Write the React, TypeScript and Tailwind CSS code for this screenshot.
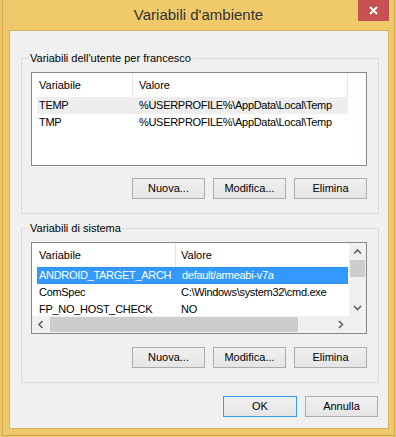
import React from 'react';

const font = { fontFamily: '"Liberation Sans", Arial, sans-serif' };

const Chevron = ({ dir }: { dir: 'up' | 'down' | 'left' | 'right' }) => {
  const pts = {
    up: '1,5.5 4.5,2 8,5.5',
    down: '1,2 4.5,5.5 8,2',
    left: '5.5,1 2,4.5 5.5,8',
    right: '2,1 5.5,4.5 2,8',
  }[dir];
  const w = dir === 'up' || dir === 'down' ? 9 : 7;
  const h = dir === 'up' || dir === 'down' ? 7 : 9;
  return (
    <svg width={w} height={h} viewBox={`0 0 ${w} ${h}`}>
      <polyline points={pts} fill="none" stroke="#606060" strokeWidth="1.6" />
    </svg>
  );
};

const Button = ({ label, primary }: { label: string; primary?: boolean }) => (
  <button
    className={
      'h-[21px] flex items-center justify-center text-[11px] text-black bg-gradient-to-b from-[#f0f0f0] to-[#e5e5e5] border ' +
      (primary ? 'w-[74px] border-[#3399ff]' : 'w-[73px] border-[#acacac]')
    }
  >
    {label}
  </button>
);

const userVars = [
  { name: 'TEMP', value: '%USERPROFILE%\\AppData\\Local\\Temp' },
  { name: 'TMP', value: '%USERPROFILE%\\AppData\\Local\\Temp' },
];

const sysVars = [
  { name: 'ANDROID_TARGET_ARCH', value: 'default/armeabi-v7a' },
  { name: 'ComSpec', value: 'C:\\Windows\\system32\\cmd.exe' },
  { name: 'FP_NO_HOST_CHECK', value: 'NO' },
];

export default function App() {
  return (
    <div className="w-[396px] h-[437px] bg-[#f0c96b] text-black overflow-hidden" style={font}>
      <div className="relative ml-[2px] w-[393px] h-[436px] border-x border-b border-[#d2a64f] bg-[#f0c96b] flex flex-col">
        {/* title bar */}
        <div className="h-[30px] flex items-center justify-center text-[15px] text-[#333333]">
          Variabili d'ambiente
        </div>
        <div className="absolute top-0 right-[5px] w-[31px] h-[21px] bg-[#c75050] flex items-center justify-center">
          <svg width="9" height="9" viewBox="0 0 9 9">
            <path d="M1 1 L8 8 M8 1 L1 8" stroke="white" strokeWidth="2" />
          </svg>
        </div>

        {/* client area */}
        <div className="ml-[6px] w-[380px] h-[399px] border border-[#d9b25f] bg-[#f0f0f0] text-[11px]">
          {/* user variables */}
          <fieldset className="mt-[19px] ml-[11px] w-[358px] border border-[#dcdcdc] pb-[14px]">
            <legend className="ml-[6px] px-[2px] leading-[16px]">Variabili dell'utente per francesco</legend>
            <div className="mt-[6px] ml-[9px] w-[336px] h-[94px] border border-[#828790] bg-white">
              <div className="flex h-[24px] items-center">
                <div className="w-[101px] h-full pl-[7px] flex items-center border-r border-[#e5e5e5]">Variabile</div>
                <div className="w-[215px] h-full pl-[6px] flex items-center border-r border-[#e5e5e5]">Valore</div>
              </div>
              {userVars.map((v, i) => (
                <div
                  key={v.name}
                  className={'ml-[5px] w-[311px] h-[17px] flex items-center tracking-[-0.3px] ' + (i === 0 ? 'bg-[#eeeeee]' : '')}
                >
                  <div className="w-[96px] pl-[2px]">{v.name}</div>
                  <div className="pl-[6px] whitespace-nowrap">{v.value}</div>
                </div>
              ))}
            </div>
            <div className="mt-[12px] ml-[9px] w-[336px] flex justify-end gap-[8px]">
              <Button label="Nuova..." />
              <Button label="Modifica..." />
              <Button label="Elimina" />
            </div>
          </fieldset>

          {/* system variables */}
          <fieldset className="mt-[6px] ml-[11px] w-[358px] border border-[#dcdcdc] pb-[14px]">
            <legend className="ml-[6px] px-[2px] leading-[16px]">Variabili di sistema</legend>
            <div className="mt-[6px] ml-[9px] w-[336px] h-[92px] border border-[#828790] bg-white flex flex-col">
              <div className="flex h-[73px]">
                <div className="flex-1 overflow-hidden">
                  <div className="flex h-[24px] items-center">
                    <div className="w-[144px] h-full pl-[7px] flex items-center border-r border-[#e5e5e5]">Variabile</div>
                    <div className="pl-[5px]">Valore</div>
                  </div>
                  {sysVars.map((v, i) => (
                    <div
                      key={v.name}
                      className={
                        'ml-[5px] w-[311px] h-[17px] flex items-center whitespace-nowrap tracking-[-0.3px] ' +
                        (i === 0 ? 'bg-[#3399ff] text-white border border-dotted border-[#b86a2c]' : '')
                      }
                    >
                      <div className={'w-[139px] ' + (i === 0 ? 'pl-[1px]' : 'pl-[2px]')}>{v.name}</div>
                      <div className="pl-[5px]">{v.value}</div>
                    </div>
                  ))}
                </div>
                <div className="w-[17px] bg-[#f0f0f0] flex flex-col items-center">
                  <div className="h-[17px] flex items-center justify-center">
                    <Chevron dir="up" />
                  </div>
                  <div className="w-[15px] h-[17px] bg-[#cdcdcd]" />
                  <div className="flex-1" />
                  <div className="h-[17px] flex items-center justify-center">
                    <Chevron dir="down" />
                  </div>
                </div>
              </div>
              <div className="flex h-[17px]">
                <div className="flex-1 bg-[#f0f0f0] flex items-center">
                  <div className="w-[17px] flex items-center justify-center">
                    <Chevron dir="left" />
                  </div>
                  <div className="ml-[1px] w-[248px] h-[15px] bg-[#cdcdcd]" />
                  <div className="flex-1" />
                  <div className="w-[17px] flex items-center justify-center">
                    <Chevron dir="right" />
                  </div>
                </div>
                <div className="w-[17px] bg-[#f0f0f0]" />
              </div>
            </div>
            <div className="mt-[13px] ml-[9px] w-[336px] flex justify-end gap-[8px]">
              <Button label="Nuova..." />
              <Button label="Modifica..." />
              <Button label="Elimina" />
            </div>
          </fieldset>

          {/* dialog buttons */}
          <div className="mt-[13px] ml-[11px] w-[358px] pr-[1px] flex justify-end gap-[8px]">
            <Button label="OK" primary />
            <Button label="Annulla" primary={false} />
          </div>
        </div>
      </div>
    </div>
  );
}
